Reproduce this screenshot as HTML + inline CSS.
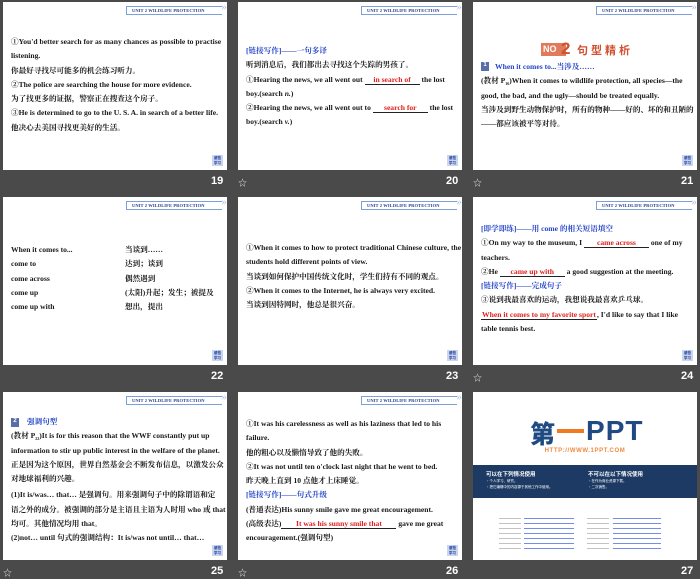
<!DOCTYPE html>
<html><head><meta charset="utf-8"><style>
*{margin:0;padding:0;box-sizing:border-box}
body{width:700px;height:577px;background:#4a4a4a;position:relative;overflow:hidden;font-family:"Liberation Serif","Noto Serif CJK SC","Noto Sans CJK SC",serif}
.s{position:absolute;width:224px;height:168px;background:#fff;overflow:hidden}
.tag{position:absolute;left:123px;top:4px;width:96px;height:9px;border:1px solid #7f9fd8;font:bold 4.5px "Liberation Serif",serif;color:#27408b;line-height:7px;padding-left:5px;letter-spacing:.1px;border-right:none}
.tag:after{content:"»";position:absolute;right:-5px;top:-3px;font-size:11px;color:#a9bde6;font-weight:normal}
.ic{position:absolute;right:4px;bottom:4px;width:11px;height:11px;background:#c9d6ee;font:bold 3.5px sans-serif;color:#2440a0;text-align:center;line-height:5px;padding-top:1px}
.t{position:absolute;left:8px;right:6px;font-size:7.6px;font-weight:bold;color:#1a1a1a;line-height:14.3px}
.t p{white-space:nowrap;height:14.3px}
.sb{font-size:4px;position:relative;top:2px}
.b{color:#2545c8}.r{color:#e02020}
.u{display:inline-block;border-bottom:1px solid #222;text-align:center;line-height:9px}
.n{position:absolute;color:#fff;font:bold 11px "Liberation Sans",sans-serif}
.st{position:absolute;color:#ddd;font-size:9px}
</style></head><body>

<!-- 19 -->
<div class="s" style="left:3px;top:2px">
<div class="tag">UNIT 2 WILDLIFE PROTECTION</div>
<div class="t" style="top:33px">
<p>①You'd better search for as many chances as possible to practise</p>
<p>listening.</p>
<p>你最好寻找尽可能多的机会练习听力。</p>
<p>②The police are searching the house for more evidence.</p>
<p>为了找更多的证据，警察正在搜查这个房子。</p>
<p>③He is determined to go to the U. S. A. in search of a better life.</p>
<p>他决心去美国寻找更美好的生活。</p>
</div>
<div class="ic">感悟<br>学习</div>
</div>
<div class="n" style="left:211px;top:175px">19</div>

<!-- 20 -->
<div class="s" style="left:238px;top:2px">
<div class="tag">UNIT 2 WILDLIFE PROTECTION</div>
<div class="t" style="top:42px">
<p class="b">[链接写作]——一句多译</p>
<p>听到消息后，我们都出去寻找这个失踪的男孩了。</p>
<p>①Hearing the news, we all went out <span class="u r" style="width:55px">in search of</span> the lost</p>
<p>boy.(search <i>n.</i>)</p>
<p>②Hearing the news, we all went out to <span class="u r" style="width:55px">search for</span> the lost</p>
<p>boy.(search <i>v.</i>)</p>
</div>
<div class="ic">感悟<br>学习</div>
</div>
<div class="st" style="left:238px;top:176px">☆</div>
<div class="n" style="left:446px;top:175px">20</div>

<!-- 21 -->
<div class="s" style="left:473px;top:2px">
<div class="tag">UNIT 2 WILDLIFE PROTECTION</div>
<div style="position:absolute;left:68px;top:41px;width:25px;height:13px;background:#e07a5a;color:#fff;font:bold 9px sans-serif;line-height:13px;padding-left:2px">NO</div>
<div style="position:absolute;left:88px;top:37px;font:bold 17px 'Liberation Sans',sans-serif;color:#d05030">2</div>
<div style="position:absolute;left:104px;top:40px;font:bold 11px 'Noto Sans CJK SC',sans-serif;color:#d05030;letter-spacing:3px">句型精析</div>
<div style="position:absolute;left:8px;top:60px;width:8px;height:9px;background:#5a6fa8;color:#fff;font:bold 6px sans-serif;text-align:center">1</div>
<div class="t" style="top:58px;left:8px">
<p class="b" style="padding-left:14px">When it comes to...当涉及……</p>
<p>(教材 P<span class="sb">16</span>)When it comes to wildlife protection, all species—the</p>
<p>good, the bad, and the ugly—should be treated equally.</p>
<p>当涉及到野生动物保护时，所有的物种——好的、坏的和丑陋的</p>
<p>——都应该被平等对待。</p>
</div>
<div class="ic">感悟<br>学习</div>
</div>
<div class="st" style="left:473px;top:176px">☆</div>
<div class="n" style="left:681px;top:175px">21</div>

<!-- 22 -->
<div class="s" style="left:3px;top:197px">
<div class="tag">UNIT 2 WILDLIFE PROTECTION</div>
<div class="t" style="top:46px">
<p>When it comes to...</p><p>come to</p><p>come across</p><p>come up</p><p>come up with</p>
</div>
<div class="t" style="top:46px;left:122px">
<p>当谈到……</p><p>达到；谈到</p><p>偶然遇到</p><p>(太阳)升起；发生；被提及</p><p>想出，提出</p>
</div>
<div class="ic">感悟<br>学习</div>
</div>
<div class="n" style="left:211px;top:370px">22</div>

<!-- 23 -->
<div class="s" style="left:238px;top:197px">
<div class="tag">UNIT 2 WILDLIFE PROTECTION</div>
<div class="t" style="top:44px">
<p>①When it comes to how to protect traditional Chinese culture, the</p>
<p>students hold different points of view.</p>
<p>当谈到如何保护中国传统文化时，学生们持有不同的观点。</p>
<p>②When it comes to the Internet, he is always very excited.</p>
<p>当谈到因特网时，他总是很兴奋。</p>
</div>
<div class="ic">感悟<br>学习</div>
</div>
<div class="n" style="left:446px;top:370px">23</div>

<!-- 24 -->
<div class="s" style="left:473px;top:197px">
<div class="tag">UNIT 2 WILDLIFE PROTECTION</div>
<div class="t" style="top:25px">
<p class="b">[即学即练]——用 come 的相关短语填空</p>
<p>①On my way to the museum, I <span class="u r" style="width:65px">came across</span> one of my</p>
<p>teachers.</p>
<p>②He <span class="u r" style="width:65px">came up with</span> a good suggestion at the meeting.</p>
<p class="b">[链接写作]——完成句子</p>
<p>③说到我最喜欢的运动，我想说我最喜欢乒乓球。</p>
<p><span class="u r" style="width:116px">When it comes to my favorite sport</span>, I'd like to say that I like</p>
<p>table tennis best.</p>
</div>
<div class="ic">感悟<br>学习</div>
</div>
<div class="st" style="left:473px;top:371px">☆</div>
<div class="n" style="left:681px;top:370px">24</div>

<!-- 25 -->
<div class="s" style="left:3px;top:392px">
<div class="tag">UNIT 2 WILDLIFE PROTECTION</div>
<div style="position:absolute;left:8px;top:26px;width:8px;height:9px;background:#5a6fa8;color:#fff;font:bold 6px sans-serif;text-align:center">2</div>
<div class="t" style="top:23px">
<p class="b" style="padding-left:16px">强调句型</p>
<p>(教材 P<span class="sb">22</span>)It is for this reason that the WWF constantly put up</p>
<p>information to stir up public interest in the welfare of the planet.</p>
<p>正是因为这个原因，世界自然基金会不断发布信息，以激发公众</p>
<p>对地球福利的兴趣。</p>
<p style="margin-top:2px">(1)It is/was… that… 是强调句。用来强调句子中的除谓语和定</p>
<p>语之外的成分。被强调的部分是主语且主语为人时用 who 或 that</p>
<p>均可。其他情况均用 that。</p>
<p>(2)not… until 句式的强调结构：It is/was not until… that…</p>
</div>
<div class="ic">感悟<br>学习</div>
</div>
<div class="st" style="left:3px;top:566px">☆</div>
<div class="n" style="left:211px;top:565px">25</div>

<!-- 26 -->
<div class="s" style="left:238px;top:392px">
<div class="tag">UNIT 2 WILDLIFE PROTECTION</div>
<div class="t" style="top:25px">
<p>①It was his carelessness as well as his laziness that led to his</p>
<p>failure.</p>
<p>他的粗心以及懒惰导致了他的失败。</p>
<p>②It was not until ten o'clock last night that he went to bed.</p>
<p>昨天晚上直到 10 点他才上床睡觉。</p>
<p class="b">[链接写作]——句式升级</p>
<p>(普通表达)His sunny smile gave me great encouragement.</p>
<p>(高级表达)<span class="u r" style="width:115px">It was his sunny smile that</span> gave me great</p>
<p>encouragement.(强调句型)</p>
</div>
<div class="ic">感悟<br>学习</div>
</div>
<div class="st" style="left:238px;top:566px">☆</div>
<div class="n" style="left:446px;top:565px">26</div>

<!-- 27 -->
<div class="s" style="left:473px;top:392px">
<div style="position:absolute;left:57px;top:23px;height:30px;white-space:nowrap;color:#1f4a82;line-height:30px">
<span style="font:900 25px 'Noto Sans CJK SC',sans-serif;vertical-align:top">第</span><span style="display:inline-block;width:27px;height:4px;background:#f07a20;vertical-align:top;margin:14px 2px 0"></span><span style="font:bold 28px 'Liberation Sans',sans-serif;vertical-align:top;letter-spacing:1px">PPT</span></div>
<div style="position:absolute;left:0;right:0;top:56px;text-align:center;font:bold 6px 'Liberation Sans',sans-serif;color:#f08a40;letter-spacing:.6px">HTTP://WWW.1PPT.COM</div>
<div style="position:absolute;left:0;right:0;top:73px;height:33px;background:#1c3a64;color:#fff;font:bold 5px 'Noto Sans CJK SC',sans-serif">
<div style="position:absolute;left:13px;top:5px;font-size:5.5px">可以在下列情况使用</div>
<div style="position:absolute;left:13px;top:14px;font-size:3.5px;font-weight:normal;line-height:6px">•个人学习、研究。<br>•把它编辑中的内容源于其他工作中使用。</div>
<div style="position:absolute;left:115px;top:5px;font-size:5.5px">不可以在以下情况使用</div>
<div style="position:absolute;left:115px;top:14px;font-size:3.5px;font-weight:normal;line-height:6px">•在作为商业资源下载。<br>•二次销售。</div>
</div>
<div style="position:absolute;left:26px;top:126px;width:22px;height:35px;background:repeating-linear-gradient(#999 0 1px,transparent 1px 5px);opacity:.6"></div>
<div style="position:absolute;left:51px;top:126px;width:50px;height:35px;background:repeating-linear-gradient(#3a5ae0 0 1px,transparent 1px 5px);opacity:.7"></div>
<div style="position:absolute;left:114px;top:126px;width:22px;height:35px;background:repeating-linear-gradient(#999 0 1px,transparent 1px 5px);opacity:.6"></div>
<div style="position:absolute;left:140px;top:126px;width:48px;height:35px;background:repeating-linear-gradient(#3a5ae0 0 1px,transparent 1px 5px);opacity:.7"></div>
</div>
<div class="n" style="left:681px;top:565px">27</div>
</body></html>
